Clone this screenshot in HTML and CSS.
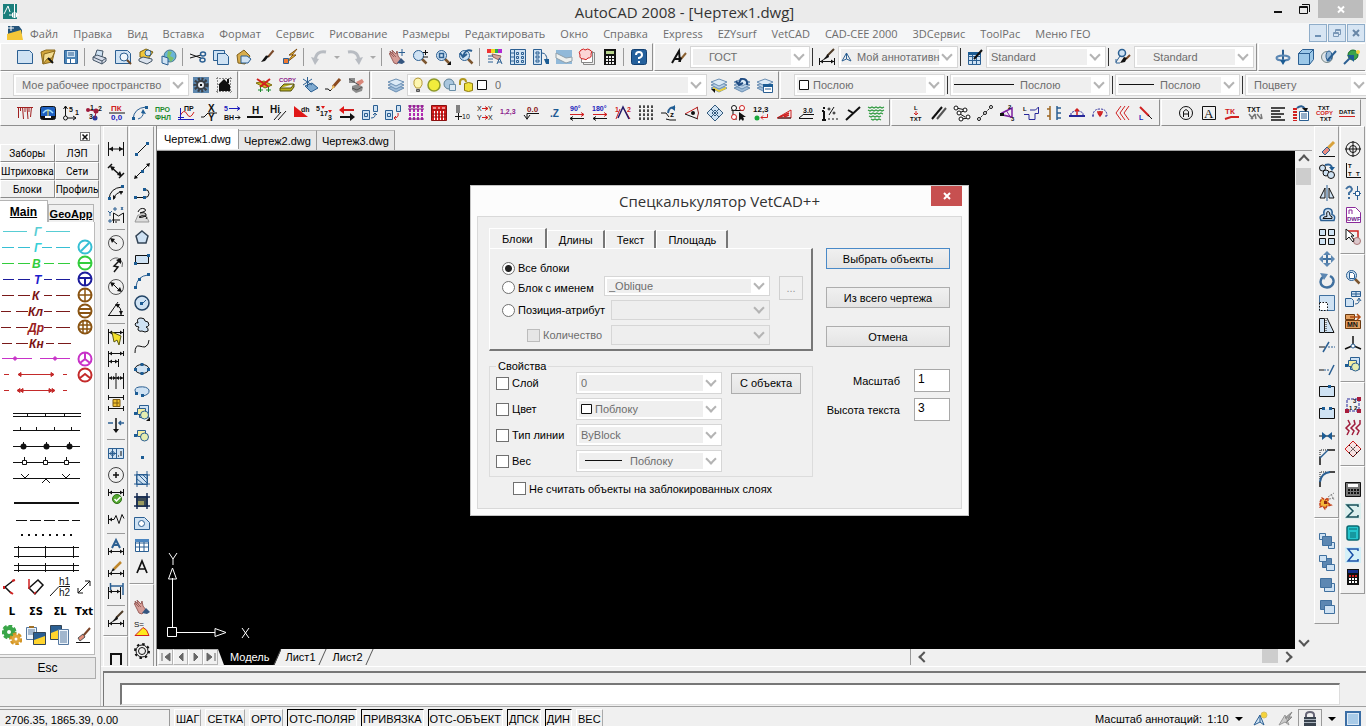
FILE: index.html
```html
<!DOCTYPE html>
<html lang="ru">
<head>
<meta charset="utf-8">
<title>AutoCAD 2008 - [Чертеж1.dwg]</title>
<link rel="stylesheet" href="styles.css">
</head>
<body>
<svg class="defs" aria-hidden="true">
  <symbol id="dim" viewBox="0 0 16 16"><path class="k" d="M.5 1v14M15.500 1v14M1 8h14"/><path class="fk n" d="M1 8l4-2.500v5zM15 8l-4-2.500v5z"/></symbol>
  <symbol id="dimlow" viewBox="0 0 16 16"><path class="k" d="M.5 9v7M15.500 9v7M1 12.500h14"/><path class="fk n" d="M1 12.500l3-2v4zM15 12.500l-3-2v4z"/></symbol>
  <symbol id="dimtop" viewBox="0 0 16 16"><path class="k" d="M.5 0v7M15.500 0v7M1 3.500h14"/><path class="fk n" d="M1 3.500l3-2v4zM15 3.500l-3-2v4z"/></symbol>
  <symbol id="brush" viewBox="0 0 16 16"><path class="w2" stroke="#7a4a2a" d="M14.500 1.500L9 8"/><path class="fk n" d="M10 7L7 6.500 2 13l4-1z"/></symbol>
  <symbol id="lens" viewBox="0 0 16 16"><path stroke="#7c5630" stroke-width="2.500" d="M10 10l4.500 4.500"/><circle class="fl b" cx="6.500" cy="6.500" r="5"/></symbol>
  <symbol id="layers" viewBox="0 0 16 16"><path fill="#9dbbd8" stroke="#6b8fb3" d="M0 11l8-3 8 3-8 4z"/><path fill="#b9d0e6" stroke="#6b8fb3" d="M0 8l8-3 8 3-8 4z"/><path fill="#dceaf6" stroke="#6b8fb3" d="M0 5l8-3 8 3-8 4z"/></symbol>
  <symbol id="page" viewBox="0 0 16 16"><path class="fl b" d="M.5 1.500h12l3 3v10H.5z"/></symbol>
  <symbol id="shapes" viewBox="0 0 16 16"><path fill="#f4eda0" class="b" d="M3.500 3.500h8v6h-8z"/><circle fill="#e5edb0" class="b" cx="10.500" cy="10" r="4"/><path class="fb n" d="M0 7h3v3H0z"/></symbol>
  <symbol id="hand" viewBox="0 0 16 16"><path fill="#d69c96" stroke="#9a625e" d="M0 4l2 1-1-3 3 3-1-4 4 4 1-3 1 5 3 4-4 4-3-1z"/><path stroke="#9a625e" d="M2 5l3 3M4 5l3 3"/><path fill="#34557f" class="n" d="M8 14l4-5 4 4-3 2z"/></symbol>
</svg>

<header class="titlebar">
  <svg class="i" viewBox="0 0 16 16"><path fill="#1b7f7c" class="n" d="M0 0h14v15H0z"/><path class="w" d="M1 10l4-8 2 6M11.500 0v14M6 11h10M9.500 9h4v4h-4z"/></svg>
  <h1>AutoCAD 2008 - [Чертеж1.dwg]</h1>
  <div class="wbtns">
    <button aria-label="Свернуть"><svg class="i" viewBox="0 0 16 16"><path class="k w2" d="M4 11h8"/></svg></button>
    <button aria-label="Развернуть"><svg class="i" viewBox="0 0 16 16"><path class="k" d="M3.500 5.500h8v7h-8zM3 6.500h9M6 3.500h7.500V11"/></svg></button>
    <button class="wclose" aria-label="Закрыть"><svg class="i" viewBox="0 0 16 16"><path class="w w2" d="M5 5.500l6 6M11 5.500l-6 6"/></svg></button>
  </div>
</header>

<nav class="menubar">
  <svg class="i" viewBox="0 0 16 16"><path fill="#24547a" class="n" d="M1 1h11l3 4v4L1 14z"/><path fill="#f5c738" class="n" d="M0 9l14-4 2 10H0z"/><path class="w" d="M1 3h6M4 0v6"/></svg>
  <a href="#">Файл</a><a href="#">Правка</a><a href="#">Вид</a><a href="#">Вставка</a><a href="#">Формат</a><a href="#">Сервис</a><a href="#">Рисование</a><a href="#">Размеры</a><a href="#">Редактировать</a><a href="#">Окно</a><a href="#">Справка</a><a href="#">Express</a><a href="#">EZYsurf</a><a href="#">VetCAD</a><a href="#">CAD-CEE 2000</a><a href="#">3DСервис</a><a href="#">ToolPac</a><a href="#">Меню ГЕО</a>
  <div class="mdi">
    <button aria-label="Свернуть документ"><svg class="i" viewBox="0 0 16 16"><path class="w2" stroke="#6e90b4" d="M5 11h6"/></svg></button>
    <button aria-label="Восстановить документ"><svg class="i" viewBox="0 0 16 16"><path stroke="#7a98b8" d="M4.500 7.500h5v4h-5zM6.500 7V4.500h5v5H10M4 8.500h6M6 5.500h6"/></svg></button>
    <button aria-label="Закрыть документ"><svg class="i" viewBox="0 0 16 16"><path class="w2" stroke="#6886a6" d="M5 5l6 6M11 5l-6 6"/></svg></button>
  </div>
</nav>

<div class="bar">
  <div class="grp lead">
    <button aria-label="Создать"><svg class="i" viewBox="0 0 16 16"><use href="#page"/></svg></button>
    <button aria-label="Открыть"><svg class="i" viewBox="0 0 16 16"><path fill="#d2a63c" stroke="#8b6a1c" d="M1 3l5-2h9l-3 12-9 2z"/><path fill="#f3dc90" stroke="#8b6a1c" d="M4 5l11-3-3 7-5 1-4 5z"/><path class="k w2" d="M8 9l5 5"/></svg></button>
    <button aria-label="Сохранить"><svg class="i" viewBox="0 0 16 16"><path fill="#4d86b8" class="b" d="M1.500 1.500h13v13h-13z"/><path class="fl n" d="M4 2h8v6H4z"/><path class="fw n" d="M4 10h8v4H4z"/><path class="b" d="M5 4h6M5 6h6M7.500 10v4"/></svg></button>
    <span class="sep"></span>
    <button aria-label="Печать"><svg class="i" viewBox="0 0 16 16"><path class="fl" stroke="#456" d="M3 7l2-6 6 1-1 6z"/><path fill="#d6dce8" stroke="#456" d="M1 8l4-2 9 3v3l-4 3-9-4z"/><path stroke="#456" d="M1 8l9 4 4-3M10 12v3"/></svg></button>
    <button aria-label="Просмотр печати"><svg class="i" viewBox="0 0 16 16"><use href="#page"/><circle fill="#eef6fc" class="b" cx="9" cy="8" r="4"/><path stroke="#6b4423" class="w2" d="M12 11l4 4"/></svg></button>
    <button aria-label="Публикация"><svg class="i" viewBox="0 0 16 16"><path fill="#f0c63a" stroke="#7d6210" d="M2 3l6-3 7 3-5 7-8-2z"/><circle class="fl b" cx="10" cy="4" r="3"/><path fill="#dbe3ee" stroke="#456" d="M1 10l4-2 9 2v2l-5 3-8-3z"/></svg></button>
    <button aria-label="Публикация в Интернете"><svg class="i" viewBox="0 0 16 16"><circle fill="#69b4d8" stroke="#47788f" cx="9" cy="7" r="6"/><path fill="#7cc06b" class="n" d="M7 2l4 1-2 4 4 2-3 4-4-5z"/><path class="fl b" d="M1 7l6 2v7l-6-2z"/></svg></button>
    <span class="sep"></span>
    <button aria-label="Вырезать"><svg class="i" viewBox="0 0 16 16"><path class="k" d="M0 5l11 4M0 9l11-3"/><ellipse class="b" stroke-width="1.500" cx="13" cy="5" rx="2.500" ry="2"/><ellipse class="b" stroke-width="1.500" cx="12.500" cy="11" rx="2.500" ry="2"/></svg></button>
    <button aria-label="Копировать"><svg class="i" viewBox="0 0 16 16"><path class="fl b" d="M.5 1.500h11v10H.5z"/><path class="fl b" d="M4.500 4.500h8l3 3v8h-11z"/></svg></button>
    <button aria-label="Вставить"><svg class="i" viewBox="0 0 16 16"><path fill="#d8ad4c" stroke="#81611c" d="M1 6l7-5 6 6-5 8-7-1z"/><path class="fl b" d="M5 7h6l4 3-3 4H5z"/></svg></button>
    <button aria-label="Копирование свойств"><svg class="i" viewBox="0 0 16 16"><use href="#brush"/></svg></button>
    <button aria-label="Редактор блоков"><svg class="i" viewBox="0 0 16 16"><path fill="#ffd632" stroke="#7d4b13" d="M15 0L7 6h4L4 14l10-8h-4z"/><path fill="#f07830" class="b" d="M1.500 9.500h5v5h-5z"/></svg></button>
    <span class="sep"></span>
    <button aria-label="Отменить"><svg class="i" viewBox="0 0 16 16"><path stroke="#b8bcc2" stroke-width="3" d="M15 3Q5 1 4 12"/><path fill="#b8bcc2" class="n" d="M0 8l8 2-4 6z"/></svg></button>
    <button class="dd" aria-label="Список отмен"></button>
    <button aria-label="Повторить"><svg class="i" viewBox="0 0 16 16"><path stroke="#b8bcc2" stroke-width="3" d="M1 3Q11 1 12 12"/><path fill="#b8bcc2" class="n" d="M16 8l-8 2 4 6z"/></svg></button>
    <button class="dd" aria-label="Список повторов"></button>
    <span class="sep"></span>
    <button aria-label="Панорамирование"><svg class="i" viewBox="0 0 16 16"><use href="#hand"/><path class="b" d="M13 0v7M9.500 3.500H16"/></svg></button>
    <button aria-label="Зумирование"><svg class="i" viewBox="0 0 16 16"><use href="#lens"/><path class="k" d="M13.500 1v5M11 3.500h5M11 8h5"/></svg></button>
    <button aria-label="Показать рамкой"><svg class="i" viewBox="0 0 16 16"><use href="#lens"/><path class="b" stroke-width="1.500" d="M4.500 4.500h4v4h-4z"/><path class="fk n" d="M16 12v4h-4z"/></svg></button>
    <button aria-label="Показать предыдущий"><svg class="i" viewBox="0 0 16 16"><use href="#lens"/><path class="b w2" d="M14 2Q8-1 5 7M2 4l3 4 4-3"/></svg></button>
    <span class="sep"></span>
    <button aria-label="Свойства"><svg class="i" viewBox="0 0 16 16"><path fill="#e33" class="n" d="M0 0h4v4H0z"/><path fill="#f4d820" class="n" d="M4 0h4v4H4z"/><path fill="#28b14c" class="n" d="M8 0h3v4H8z"/><path fill="#b32ad6" class="n" d="M11 0h4v4h-4z"/><path fill="#d8a49c" stroke="#94645c" d="M5 5l9 2-2 4-6-3z"/><path class="b" d="M1 7h5M1 10h5M1 13h5M10 15l2.500-6 2.500 6M11 13h3"/></svg></button>
    <button aria-label="Центр управления"><svg class="i" viewBox="0 0 16 16"><path class="fl b" d="M.5.5h15v15H.5z"/><path class="b" d="M4.500 1v15M6.500 3.500h2v2h-2zM11.500 3.500h2v2h-2zM6.500 7.500h2v2h-2zM11.500 7.500h2v2h-2zM6.500 11.500h2v2h-2zM11.500 11.500h2v2h-2zM1 4h3M1 8h3M1 12h3"/></svg></button>
    <button aria-label="Палитры"><svg class="i" viewBox="0 0 16 16"><path class="fl b" d="M.5.500h8v15h-8z"/><path class="b" d="M3 3h3v2H3zM3 7h3v2H3zM3 11h3v2H3zM9 4q5 0 5 8"/><path class="fb n" d="M11 10h5v5h-3z"/></svg></button>
    <button aria-label="Подшивки"><svg class="i" viewBox="0 0 16 16"><path fill="#91b9d9" class="n" d="M0 1h16v14H0z"/><path fill="#eef0ee" stroke="#8f9faa" d="M0 4l10 5 6-1v4l-6 2L0 9z"/></svg></button>
    <button aria-label="Пометки"><svg class="i" viewBox="0 0 16 16"><path fill="#ededed" stroke="#888" d="M4.500 3.500h11v12h-11z"/><path class="fw" stroke="#888" d="M2.500 2.500h11v11h-11z"/><path class="r" fill="#fbd5d5" d="M2 1q3-2 4 0 3-2 5 0 3 1 1 4 1 4-3 4-2 3-4 1-5 0-4-4-2-3 1-5z"/></svg></button>
    <button aria-label="Калькулятор"><svg class="i" viewBox="0 0 16 16"><path class="fk n" d="M2 0h12v16H2z"/><path fill="#b6d28c" class="n" d="M4 2h8v3H4z"/><path stroke="#eee" stroke-width="2" stroke-dasharray="2 1" d="M4 8h8M4 11h8M4 14h8"/></svg></button>
    <span class="sep"></span>
    <button aria-label="Справка"><svg class="i" viewBox="0 0 16 16"><rect fill="#24609c" stroke="#123f70" x=".5" y=".5" width="15" height="15" rx="2"/><path class="w w2" d="M5 6q0-3 3-3t3 3q0 2-3 3v1M8 12v2"/></svg></button>
  </div>
  <div class="grp styles">
    <button aria-label="Стиль текста"><svg class="i" viewBox="0 0 16 16"><path class="k w2" d="M1 14L8 2l1 11M4 10h5"/><path class="w2" stroke="#8a6030" d="M15 4l-5 6"/><path class="fk n" d="M11 9l-2-1-2 5 3-1z"/></svg></button>
    <span class="combo c120"><select aria-label="Текстовый стиль" class="in16"><option>ГОСТ</option></select></span>
    <span class="vsep"></span>
    <button aria-label="Размерный стиль"><svg class="i" viewBox="0 0 16 16"><use href="#dimlow"/><path class="w2" stroke="#4f3c28" d="M15 0L8 7"/><path class="fk n" d="M9 5L3 12l7-4z"/></svg></button>
    <span class="combo c120"><svg class="i pre" viewBox="0 0 16 16"><path class="b" d="M4 12L8.500 4l4.500 8-4.500-2zM8.500 4v6"/></svg><select aria-label="Размеры" class="in16"><option>Мой аннотативн</option></select></span>
    <span class="vsep"></span>
    <button aria-label="Стиль таблиц"><svg class="i" viewBox="0 0 16 16"><path class="fl b" d="M1.500 3.500h12v12h-12zM1 7.500h13M1 11.500h13M5.500 4v12M9.500 4v12"/><path class="fb n" d="M1 3h13v3H1z"/><path class="k w2" d="M15 1L7 10"/></svg></button>
    <span class="combo c120"><select aria-label="Стиль таблицы"><option>Standard</option></select></span>
    <span class="vsep"></span>
    <button aria-label="Стиль мультивыносок"><svg class="i" viewBox="0 0 16 16"><circle class="fl b" stroke-width="1.500" cx="7" cy="4" r="3.500"/><path class="b" d="M5 7l-4 6M1 10v4h4"/><path class="w2" stroke="#7a4a2a" d="M15 6l-4 4"/><path class="fk n" d="M12 9l-3-1-4 6 5-1z"/></svg></button>
    <span class="combo c120"><select aria-label="Стиль выноски" class="in16"><option>Standard</option></select></span>
  </div>
  <div class="grp lead open">
    <button aria-label="Орбита"><svg class="i" viewBox="0 0 16 16"><path class="fb b" d="M7.500 1h1v13h-1z"/><ellipse stroke="#5b87b3" stroke-width="2" cx="8" cy="9" rx="6.500" ry="2.500"/><path class="fb n" d="M5 11h6l-3 5z"/></svg></button>
    <button aria-label="Куб"><svg class="i" viewBox="0 0 16 16"><path fill="#9cc8e8" class="b" d="M.5 4.500h11v11H.5zM.5 4.500l4-4h11l-4 4zM11.500 4.500l4-4v10l-4 5z"/></svg></button>
    <button aria-label="Сфера"><svg class="i" viewBox="0 0 16 16"><circle fill="#dce3e8" stroke="#788" cx="6" cy="8" r="5.500"/><ellipse fill="#9cbcd8" class="b" cx="8" cy="7" rx="3" ry="5"/><path class="b w2" d="M6 12l9-10"/></svg></button>
    <button aria-label="Визуализация"><svg class="i" viewBox="0 0 16 16"><circle fill="#3aa34a" stroke="#1a6a2a" cx="9" cy="6" r="5"/><circle fill="#f4d43a" class="n" cx="14" cy="3" r="2"/><path class="b w2" d="M0 15l8-8"/><path class="fb n" d="M10 6H3l7 7z"/></svg></button>
  </div>
</div>

<div class="bar">
  <div class="grp lead">
    <span class="combo c176"><select aria-label="Рабочее пространство" class="in6"><option>Мое рабочее пространство</option></select></span>
    <button aria-label="Параметры пространства"><svg class="i" viewBox="0 0 16 16"><path fill="#5d87ae" class="n" d="M0 0h16v16H0z"/><circle fill="none" stroke="#3a3f46" stroke-width="3" stroke-dasharray="2 1.500" cx="8" cy="8" r="6"/><circle fill="#e5e9ee" stroke="#3a3f46" stroke-width="2" cx="8" cy="8" r="4"/><path class="fk n" d="M7 7h2v2H7z"/></svg></button>
    <button aria-label="Мое пространство"><svg class="i" viewBox="0 0 16 16"><path class="g" stroke-dasharray="2 1" d="M1.500 0v16M14.500 0v16M0 1.500h16M0 14.500h16"/><path class="fk n" d="M2 8l6-6 6 6v6H3V8zM11 2h2v4h-2z"/></svg></button>
  </div>
  <div class="grp lead">
    <button aria-label="Слой объекта"><svg class="i" viewBox="0 0 16 16"><path fill="#c8b820" stroke="#7d6c10" d="M0 6l8-2 8 4-7 3z"/><path class="r w2" d="M1 2l12 8M14 2L4 10"/><path stroke="#1c8a2c" d="M4.500 10v5M2 13h5M12.500 10v5M10 13h5"/></svg></button>
    <button aria-label="Копия слоя"><svg class="i" viewBox="0 0 16 16"><path fill="#b8b020" stroke="#555010" d="M1 11l4-4h10l-3 4zM1 11v3h11l3-4V7"/><text class="t6" fill="#8a1a8a" x="0" y="5">COPY</text></svg></button>
    <button aria-label="Заморозить слой"><svg class="i" viewBox="0 0 16 16"><path fill="#7faad0" class="b" d="M3 9l7-3 6 5-7 4z"/><path class="b" d="M5.500 0v10M1 2l9 6M10 2L1 8"/></svg></button>
    <button aria-label="Карандаш"><svg class="i" viewBox="0 0 16 16"><path stroke="#8a4a20" stroke-width="3" d="M15 2L8 10"/><path class="k" d="M0 12q4-1 5 2l4-4"/><path fill="#f0c060" class="n" d="M8 8l2 2-4 3z"/></svg></button>
    <button aria-label="Очистить слой"><svg class="i" viewBox="0 0 16 16"><path fill="#8c8c8c" class="n" d="M1 1h6v5H1zM4 9l6-2 5 3-1 4-6 2-4-3z"/><path fill="#d8877a" class="n" d="M8 5l6-3 2 3-5 4z"/><path stroke="#555" d="M1 2l10 6M4 11l5 2 5-3"/></svg></button>
  </div>
  <div class="grp lead">
    <button aria-label="Диспетчер слоев"><svg class="i" viewBox="0 0 16 16"><use href="#layers"/></svg></button>
    <span class="combo c300"><span class="pre layer">
      <svg class="i" viewBox="0 0 16 16"><path fill="#fdf6b0" stroke="#b59a3a" d="M6 11Q3 8 4 4q1-3 4-3t4 3q1 4-2 7z"/><path fill="#999" stroke="#555" d="M6.500 12.500h3v2h-3z"/></svg>
      <svg class="i" viewBox="0 0 16 16"><circle fill="#f2ec3c" stroke="#8e9a2a" stroke-width="1.500" cx="8" cy="8" r="6"/></svg>
      <svg class="i" viewBox="0 0 16 16"><circle fill="#a9c6dd" stroke="#5d8097" cx="7" cy="7" r="5"/><path fill="#dce9f2" stroke="#6b8fa8" d="M7.500 7.500h6v6h-6z"/></svg>
      <svg class="i" viewBox="0 0 16 16"><path stroke="#b09820" stroke-width="2" d="M2 8V5q0-3 3-3t3 3"/><path fill="#f0e03a" stroke="#8e7a10" d="M6.500 6.500q4-2 8 0v7q-4 2-8 0z"/></svg>
      <svg class="i" viewBox="0 0 16 16"><path class="fw k" d="M3.500 3.500h9v9h-9z"/></svg></span><select aria-label="Слой" class="in80"><option>0</option></select></span>
    <button aria-label="Сделать слой текущим"><svg class="i" viewBox="0 0 16 16"><use href="#layers"/><path fill="#e8cc3a" class="n" d="M2 10l6 3 7-3v2l-7 3-6-3z"/><path class="fk n" d="M0 12h4v4z"/></svg></button>
    <button aria-label="Предыдущее состояние"><svg class="i" viewBox="0 0 16 16"><use href="#layers"/><path class="w2" stroke="#1f4b82" d="M13 8q1-7-6-6L5 6M2 4l3 4 4-2"/></svg></button>
    <button aria-label="Состояния слоев"><svg class="i" viewBox="0 0 16 16"><use href="#layers"/><path class="fw b" d="M6.500 7.500h9v8h-9z"/><path class="fb n" d="M6 7h10v3H6z"/><path class="b" d="M8 12h6"/></svg></button>
  </div>
  <div class="grp props open">
    <span class="combo c151"><svg class="i pre" viewBox="0 0 16 16"><path class="fw k" d="M5.500 3.500h9v9h-9z"/></svg><select aria-label="Цвет слоя" class="in16"><option>Послою</option></select></span>
    <span class="vsep"></span>
    <span class="combo c160"><svg class="ln pre" viewBox="0 0 66 4"><path class="k" d="M4 1.500h60"/></svg><select aria-label="Тип линии слоя" class="in66"><option>Послою</option></select></span>
    <span class="vsep"></span>
    <span class="combo c125"><svg class="ln pre" viewBox="0 0 66 4"><path class="k" d="M4 1.500h35"/></svg><select aria-label="Вес линии слоя" class="in40"><option>Послою</option></select></span>
    <span class="vsep"></span>
    <span class="combo c125"><select aria-label="Стиль печати" class="in6"><option>Поцвету</option></select></span>
  </div>
</div>

<div class="bar short">
  <div class="grp lead">
    <button aria-label="Откос"><svg class="i" viewBox="0 0 16 16"><path stroke="#a02020" d="M0 2.500h16M1.500 2v11M3.500 2v4M5.500 2l1 12M8 2v5M10 2l1 12M12 2v5M14.500 2l-1 10"/></svg></button>
    <button aria-label="Координаты"><svg class="i" viewBox="0 0 16 16"><rect fill="#1d5fc0" stroke="#111" x=".5" y="1.500" width="15" height="13" rx="2"/><path class="fk n" d="M1 11h14v3H1z"/><path stroke="#9fe0ff" stroke-width="1.500" d="M3 8q5-6 10 0"/><path stroke="#ffe040" d="M8 5v6"/><path class="fw n" d="M5 11h6v2H5z"/></svg></button>
    <button aria-label="Сетка осей"><svg class="i" viewBox="0 0 16 16"><text class="t7" x="6" y="7">5</text><text class="t7" x="12" y="10">1</text><circle class="k" cx="2.500" cy="13" r="2"/><path class="k" d="M2.500 11V1M.5 4l2-3 2 3M5 13h8M10 11l3 2-3 2"/></svg></button>
    <button aria-label="Нумерация"><svg class="i" viewBox="0 0 16 16"><circle fill="#a01c3c" class="n" cx="2" cy="5" r="2"/><circle fill="#a01c3c" class="n" cx="10" cy="6" r="2.500"/><circle fill="#283a9c" class="n" cx="9" cy="13" r="2.500"/><path stroke="#a01c3c" d="M2 5l8 1-1 7"/><text class="t7" x="4" y="5">1</text><text class="t7" x="12" y="6">2</text><text class="t7" x="3" y="14">3</text></svg></button>
    <button aria-label="Пикет"><svg class="i" viewBox="0 0 16 16"><text class="t8 cr" x="2" y="6">ПК</text><path class="k" d="M0 8h16"/><text class="t8 cb" x="2" y="15">0,0</text></svg></button>
    <button aria-label="Дуга"><svg class="i" viewBox="0 0 16 16"><path class="b" d="M1 14Q2 3 14 2M6 14q6-2 5-7"/><path class="fb n" d="M0 12h3v3H0zM13 1h3v3h-3zM11 4l3 5-5-1z"/></svg></button>
    <button aria-label="Профиль линии"><svg class="i" viewBox="0 0 16 16"><text class="t7 cg" x="0" y="7">ПРО</text><text class="t7 cg" x="0" y="15">ФНЛ</text></svg></button>
    <button aria-label="График профиля"><svg class="i" viewBox="0 0 16 16"><text class="t7" x="6" y="6">ПР</text><path class="r" d="M2 11q4-8 7-2t7-2"/><path stroke="#1b1bbb" d="M2.500 3v11M0 14.500h16M0 12.500h6"/></svg></button>
    <button aria-label="XY"><svg class="i" viewBox="0 0 16 16"><text class="t9" x="7" y="7">X</text><text class="t9" x="7" y="16">Y</text><path class="k" d="M0 12h3l4-4h9"/></svg></button>
    <button aria-label="ВН"><svg class="i" viewBox="0 0 16 16"><text class="t7 cb" x="0" y="6">5</text><path stroke="#1b1bbb" d="M5 3.500h11M13 1.500l3 2-3 2"/><text class="t7" x="0" y="15">BH</text><path class="k" d="M11 12.500h5M14 10.500l2 2-2 2"/></svg></button>
    <button aria-label="Отметка H"><svg class="i" viewBox="0 0 16 16"><text class="t9" x="5" y="9">H</text><path class="k w2" d="M0 12h16"/></svg></button>
    <button aria-label="Отметка Hi"><svg class="i" viewBox="0 0 16 16"><text class="t9" x="0" y="8">Hi</text><path class="k" d="M4 15l7-8M8 15l8-9"/></svg></button>
    <button aria-label="Уклон dh"><svg class="i" viewBox="0 0 16 16"><path class="fr n" d="M1 1v11h14z"/><text class="t7" x="8" y="7">dh</text></svg></button>
    <button aria-label="Перенумеровать"><svg class="i" viewBox="0 0 16 16"><text class="t7" x="0" y="6">5</text><text class="t7" x="4" y="11">17</text><text class="t7" x="12" y="15">3</text><path class="fr n" d="M5 1h4l-2 3zM12 5h4l-2 3z"/></svg></button>
    <button aria-label="Поменять местами"><svg class="i" viewBox="0 0 16 16"><path class="r w2" d="M4 5h11"/><path class="fr n" d="M0 5l5-4v8z"/><path class="k w2" d="M1 12h11"/><path class="fk n" d="M16 12l-5-4v8z"/></svg></button>
    <button aria-label="Копия блока"><svg class="i" viewBox="0 0 16 16"><path class="fl b" d="M.5 5.500h7v9h-7zM2.500 8.500h3v3h-3zM11.500.500h4v6h-4z"/><path class="b" d="M9 13q5 0 4-5M11 10l2-2 2 2"/></svg></button>
    <button aria-label="Замена блока"><svg class="i" viewBox="0 0 16 16"><path class="fl b" d="M.5 5.500h7v9h-7zM2.500 8.500h3v3h-3zM11.500.500h4v6h-4z"/><path class="r" d="M9 13q5 0 4-5M11 11l-2 2 2 2"/></svg></button>
    <button aria-label="Ведомость"><svg class="i" viewBox="0 0 16 16"><path class="w2" stroke="#b22bb2" stroke-dasharray="3 1" d="M2 0v16M6 0v16M10 0v16M14 0v16"/><path stroke="#7c1b7c" d="M0 1h16M0 4h16M0 14h16"/></svg></button>
    <button aria-label="Таблица"><svg class="i" viewBox="0 0 16 16"><path fill="#d81c1c" stroke="#8a1010" d="M.5.500h15v15H.5z"/><path stroke="#fff" d="M3.500 6v9M6.500 6v9M9.500 6v9M12.500 6v9M2 3h3M7 3h2M11 3h3"/><path stroke="#8a1010" d="M1 5h15M1 9h15M1 12h15"/></svg></button>
    <button aria-label="Плюс 10"><svg class="i" viewBox="0 0 16 16"><path class="k" d="M2 1h4M2 3h4M2 5h4M2 7h4M4.500 8v7M1 11.500h7"/><text class="t7 thin" x="8" y="14">10</text></svg></button>
    <button aria-label="Смена осей"><svg class="i" viewBox="0 0 16 16"><text class="t7 thin" x="0" y="6">X</text><text class="t7 thin" x="11" y="6">Y</text><text class="t7 thin" x="0" y="15">Y</text><text class="t7 thin" x="11" y="15">X</text><path class="r" d="M5 3.500h6M8 1.500l3 2-3 2M5 12.500h6M8 10.500l3 2-3 2"/></svg></button>
    <button aria-label="Номера"><svg class="i" viewBox="0 0 16 16"><text class="t7" fill="#8a1a8a" x="0" y="9">1,2,3</text></svg></button>
    <button aria-label="Отметка ноль"><svg class="i" viewBox="0 0 16 16"><text class="t8" fill="#8b1a1a" x="4" y="7">0.0</text><path class="k" d="M16 8.500H4v6M1 10l3 4 3-4"/></svg></button>
    <button aria-label="Координата Z"><svg class="i" viewBox="0 0 16 16"><text class="t9" fill="#1d5a94" x="4" y="12">.Z</text></svg></button>
    <button aria-label="Поворот 90"><svg class="i" viewBox="0 0 16 16"><text class="t7 cb" x="1" y="6">90°</text><path class="r" d="M1 9.500h14M12 7.500l3 2-3 2"/><path class="k" d="M1 13.500h14M4 11.500l-3 2 3 2"/></svg></button>
    <button aria-label="Поворот 180"><svg class="i" viewBox="0 0 16 16"><text class="t7 cb" x="0" y="6">180°</text><path class="r" d="M1 9.500h14M12 7.500l3 2-3 2"/><path class="k" d="M1 13.500h14M4 11.500l-3 2 3 2"/></svg></button>
    <button aria-label="Засечка"><svg class="i" viewBox="0 0 16 16"><path class="r" d="M1 14L5 4M15 14L9 4"/><path stroke="#241b6a" stroke-width="1.500" d="M3 13L8 2l6 12"/><text class="t7 cr" x="0" y="7">1</text><text class="t7 cr" x="12" y="7">2</text></svg></button>
    <button aria-label="Сетка"><svg class="i" viewBox="0 0 16 16"><path class="k" stroke-dasharray="2 2" d="M1 2h15M1 6h15M1 10h15M1 14h15"/><path class="k" stroke-dasharray="3 1" d="M2 0v16M6 0v16M10 0v16M14 0v16"/></svg></button>
    <button aria-label="Поворот Z"><svg class="i" viewBox="0 0 16 16"><path class="k" d="M0 8h5l3 4M5 14l4 1h6"/><path class="b w2" d="M14 3q-6-2-7 5"/><path class="fb n" d="M14 0v6l-4-3z"/><text class="t8" x="9" y="12">z</text></svg></button>
    <button aria-label="Конус"><svg class="i" viewBox="0 0 16 16"><path class="r" d="M1 9L14 2"/><path class="k" d="M1 9l13 5"/><path stroke="#8a2020" d="M13 2q3 6 0 12"/><circle class="fk n" cx="9" cy="8" r="2"/></svg></button>
    <button aria-label="Ромб"><svg class="i" viewBox="0 0 16 16"><path class="fl" stroke="#345a7c" d="M8 0l8 8-8 8-8-8z"/><path stroke="#345a7c" d="M4 4l8 8M12 4l-8 8M8 5l3 3-3 3-3-3z"/></svg></button>
    <button aria-label="Узлы"><svg class="i" viewBox="0 0 16 16"><path class="k" d="M1.500 5.500h12M3 2v12h4"/><circle class="fw k" cx="4" cy="3" r="2.500"/><circle class="fw r" cx="12" cy="3" r="2.500"/><circle class="fw r" cx="4" cy="12" r="2.500"/><path class="fk n" d="M9 7v9l2-2 2 2 1-2-1-2h3z"/></svg></button>
    <button aria-label="Точка 12,3"><svg class="i" viewBox="0 0 16 16"><text class="t8" x="0" y="7">12,3</text><circle fill="#19a83a" class="n" cx="4" cy="13" r="2.500"/><path class="r" d="M14.500 9v3.500H8M10 10.500l-2 2 2 2"/></svg></button>
    <button aria-label="Уклон"><svg class="i" viewBox="0 0 16 16"><path class="r" d="M1 13L15 5v8z"/><path class="k" d="M2 13h13"/><path class="r" stroke-width="1.500" d="M4 12l9-4M8 12l5-2"/></svg></button>
    <button aria-label="Отметка 3.0"><svg class="i" viewBox="0 0 16 16"><text class="t7" x="4" y="8">3.0</text><path class="k" d="M5 9.500h10M0 13.500h14M0 13l5-4"/></svg></button>
    <button aria-label="Промилле"><svg class="i" viewBox="0 0 16 16"><path class="k w2" d="M2 2v2M2 6v9M0 15h4M0 6h2"/><circle class="k" cx="7" cy="4" r="1"/><circle class="k" cx="12" cy="8" r="1"/><path class="k" d="M7 10l5-8M6 14h2M10 14h2M14 14h2"/></svg></button>
    <button aria-label="Примыкание"><svg class="i" viewBox="0 0 16 16"><path class="k w2" d="M1 15L15 2M3 5l5 3"/></svg></button>
    <button aria-label="Водная поверхность"><svg class="i" viewBox="0 0 16 16"><path stroke="#2f9a3f" stroke-width="1.200" d="M0 2l2 1 2-1 2 1 2-1 2 1 2-1 2 1 2-1M0 5l2 1 2-1 2 1 2-1 2 1 2-1 2 1 2-1M1 8l2 1 2-1 2 1 2-1 2 1 2-1 2 1M1 11l2 1 2-1 2 1 2-1 2 1 2-1M3 14l2 1 2-1 2 1 2-1 2 1"/></svg></button>
  </div>
  <div class="grp lead">
    <button aria-label="Длина в текст"><svg class="i" viewBox="0 0 16 16"><text class="t6" x="6" y="5">L</text><path class="r" d="M8 6v4M6 8l2 2 2-2"/><text class="t6" x="2" y="16">TXT</text></svg></button>
    <button aria-label="Параллельные"><svg class="i" viewBox="0 0 16 16"><path class="k w2" d="M1 14L11 2"/><path class="w2" stroke="#555" d="M6 14L15 3"/></svg></button>
    <button aria-label="Цепочка"><svg class="i" viewBox="0 0 16 16"><path class="k" d="M2 3l10 2M3 7l8 5M4 8l9-3M7 14l8-1"/><circle class="fw k" cx="2" cy="3" r="2"/><circle class="fw k" cx="11" cy="5" r="2"/><circle class="fw k" cx="5" cy="8" r="2"/><circle class="fw k" cx="7" cy="14" r="2"/><circle class="fw k" cx="14" cy="12" r="2"/></svg></button>
    <button aria-label="Отрезок узлов"><svg class="i" viewBox="0 0 16 16"><path class="k" stroke-dasharray="2 1" d="M2 14L14 2"/><circle class="fw k" cx="2" cy="14" r="1.500"/><circle class="fw k" cx="8" cy="8" r="1.500"/><circle class="fw k" cx="14" cy="2" r="1.500"/></svg></button>
    <button aria-label="Вершины"><svg class="i" viewBox="0 0 16 16"><path stroke="#7b1fa0" stroke-width="1.500" d="M2 8l10-5v9L3 10z"/><path stroke="#7b1fa0" d="M6 5l5 8"/><text class="t6" x="8" y="4">2</text><text class="t6" x="11" y="16">3</text><path class="fk n" d="M0 8h4v3H0z"/></svg></button>
    <button aria-label="Контур L"><svg class="i" viewBox="0 0 16 16"><text class="t6" x="0" y="6">L</text><path stroke="#28289a" d="M1 9.500h5v5h6v-6h3.500V2l-3 3H7"/></svg></button>
    <button aria-label="Опоры"><svg class="i" viewBox="0 0 16 16"><path stroke="#9c6520" stroke-width="1.500" d="M4 1v14M1 4h3M1 11h3"/><path class="b" stroke-width="1.500" d="M11 1v14M11 3h4M11 8h4M11 13h4"/></svg></button>
    <button aria-label="Бровка"><svg class="i" viewBox="0 0 16 16"><path stroke="#28289a" stroke-width="2" d="M0 11h16"/><path stroke="#28289a" stroke-dasharray="2 1" d="M2 10V8q6-4 12 0v2"/><path class="r" stroke-width="1.500" d="M8 10V4M6 6l2-2 2 2"/></svg></button>
    <button aria-label="Купол"><svg class="i" viewBox="0 0 16 16"><path stroke="#28289a" stroke-dasharray="2 1" d="M1 11q0-7 7-7t7 7M0 11h3M13 11h3"/><path class="r" stroke-width="1.500" d="M5 7h6M8 6v5M6 8l2 3 2-3"/></svg></button>
    <button aria-label="Зигзаги"><svg class="i" viewBox="0 0 16 16"><path class="r" d="M6 1L1 8l5 7M10 1L5 8l5 7M14 1L9 8l5 7"/></svg></button>
    <button aria-label="Наклон"><svg class="i" viewBox="0 0 16 16"><path class="r w2" d="M2 2l9 9"/><path class="k" d="M10 10l4 4"/><text class="t7 cb" x="1" y="15">L</text></svg></button>
  </div>
  <div class="grp lead">
    <button aria-label="Текст в круге"><svg class="i" viewBox="0 0 16 16"><circle class="k" cx="8" cy="8" r="6.500"/><path class="k" d="M5.500 12V6.500L8 4.500l2.500 2V12M6 9h4"/></svg></button>
    <button aria-label="Текст в рамке"><svg class="i" viewBox="0 0 16 16"><path class="k" d="M1.500 1.500h13v13h-13z"/><text class="serif" x="3" y="13">A</text></svg></button>
    <button aria-label="Текст ТК"><svg class="i" viewBox="0 0 16 16"><text class="t8 cr" x="1" y="9">ТК</text><path class="r w2" d="M1 14l6-2h8"/></svg></button>
    <button aria-label="Наклон текста"><svg class="i" viewBox="0 0 16 16"><text class="t7" x="0" y="7">TXT</text><path stroke="#777" stroke-width="1.500" d="M2 9l4 5M4 14l4-5M8 9l1 5M10 9l4 5M14 9l1 5"/></svg></button>
    <button aria-label="Выравнивание"><svg class="i" viewBox="0 0 16 16"><path class="k" stroke-width="1.500" d="M1 3h14M1 6h9M1 9h13M1 12h10M1 15h14"/></svg></button>
    <button aria-label="Обновить текст"><svg class="i" viewBox="0 0 16 16"><path class="r" stroke-width="4" stroke-dasharray="2 1" d="M2 3v13"/><path class="fw b" d="M6.500 6.500h9v9h-9zM8 9h6M8 11h6M8 13h6"/><path class="b w2" d="M4 3q5-4 8 1"/><path class="fk n" d="M9 3h6l-2 4z"/></svg></button>
    <button aria-label="Копия текста"><svg class="i" viewBox="0 0 16 16"><text class="t6" x="2" y="5">TXT</text><text class="t6 cr" x="0" y="10">COPY</text><text class="t6" x="4" y="16">TXT</text></svg></button>
    <button aria-label="Дата"><svg class="i" viewBox="0 0 16 16"><text class="t6" x="0" y="9">DATE</text><path class="r" d="M0 11.500h16"/></svg></button>
  </div>
</div>

<main class="work">
  <aside class="palette">
    <div class="phead"><button aria-label="Закрыть палитру"><svg class="x8" viewBox="0 0 8 8"><path class="k" stroke-width="1.500" d="M1.500 1.500l5 5M6.500 1.500l-5 5"/></svg></button></div>
    <div class="pbtns"><button>Заборы</button><button>ЛЭП</button><button>Штриховка</button><button>Сети</button><button>Блоки</button><button>Профиль</button></div>
    <div class="ptabs"><button class="on">Main</button><button>GeoApp</button></div>
    <div class="plist">
      <button aria-label="Газ сплошная"><svg class="row" viewBox="0 0 96 16"><g stroke="#58cdd4"><path d="M3 8.500h24M46 8.500h24"/></g><text fill="#58cdd4" x="34" y="13">Г</text></svg></button>
      <button aria-label="Газ пунктир"><svg class="row" viewBox="0 0 96 16"><g stroke="#36bfd4"><path d="M2 8.500h12M18 8.500h12M42 8.500h10M56 8.500h14"/><circle stroke-width="2" cx="85" cy="8" r="6.500"/><path stroke-width="2" d="M81 12l8-8"/></g><text fill="#36d0d8" x="34" y="13">Г</text></svg></button>
      <button aria-label="Водопровод"><svg class="row" viewBox="0 0 96 16"><g stroke="#32cd3c"><path d="M2 8.500h12M18 8.500h12M44 8.500h10M58 8.500h12"/><circle stroke-width="2" cx="85" cy="8" r="6.500"/><path stroke-width="2" d="M79 8h12"/></g><text fill="#32cd3c" x="32" y="13">В</text></svg></button>
      <button aria-label="Теплосеть"><svg class="row" viewBox="0 0 96 16"><g stroke="#1c1c9c"><path d="M3 8.500h11M18 8.500h12M44 8.500h8M56 8.500h14"/><circle stroke-width="2" cx="85" cy="8" r="6.500"/><path stroke-width="2" d="M79 7h12M85 7v7"/></g><text fill="#1c1ccc" x="34" y="13">Т</text></svg></button>
      <button aria-label="Канализация"><svg class="row" viewBox="0 0 96 16"><g stroke="#7a1a1a"><path d="M2 8.500h12M18 8.500h12M44 8.500h8M56 8.500h14"/></g><g stroke="#8a5412"><circle stroke-width="2" cx="85" cy="8" r="6.500"/><path stroke-width="1.500" d="M79 8h12M85 2v12"/></g><text fill="#7a1414" x="32" y="13">К</text></svg></button>
      <button aria-label="Канализация ливневая"><svg class="row" viewBox="0 0 96 16"><g stroke="#7a1a1a"><path d="M1 8.500h10M16 8.500h12M44 8.500h8M56 8.500h14"/></g><g stroke="#8a5412"><circle stroke-width="2" cx="85" cy="8" r="6.500"/><path stroke-width="2" d="M79 6h12M79 10h12"/></g><text fill="#7a1414" x="28" y="13">Кл</text></svg></button>
      <button aria-label="Дренаж"><svg class="row" viewBox="0 0 96 16"><g stroke="#7a1a1a"><path d="M1 8.500h10M16 8.500h12M44 8.500h8M56 8.500h14"/></g><g stroke="#8a5412"><circle stroke-width="2" cx="85" cy="8" r="6.500"/><path stroke-width="1.500" d="M79 6h12M79 10h12M83 2v12M87 2v12"/></g><text fill="#9a2020" x="28" y="13">Др</text></svg></button>
      <button aria-label="Канализация напорная"><svg class="row" viewBox="0 0 96 16"><g stroke="#7a1a1a"><path d="M2 8.500h10M16 8.500h12M46 8.500h8M58 8.500h13"/></g><text fill="#7a1414" x="29" y="13">Кн</text></svg></button>
      <button aria-label="Кабель"><svg class="row" viewBox="0 0 96 16"><g stroke="#c832c8"><path d="M2 7.500h30M40 7.500h30"/><circle stroke-width="2" cx="85" cy="8" r="6.500"/><path stroke-width="2" d="M85 2v6l-5 4M85 8l5 4"/><path fill="#c832c8" d="M13 7.500l2-2 2 2-2 2zM53 7.500l2-2 2 2-2 2z"/></g></svg></button>
      <button aria-label="Кабель силовой"><svg class="row" viewBox="0 0 96 16"><g stroke="#c42a2a"><path d="M4 7.500h5M18 7.500h36M63 7.500h4"/><circle stroke-width="2" cx="85" cy="8" r="6.500"/><path stroke-width="2" d="M80 11l5-4 5 4"/><path fill="#c42a2a" d="M18 7.500l3-2v4zM54 7.500l-3-2v4z"/></g></svg></button>
      <button aria-label="Кабель высоковольтный"><svg class="row" viewBox="0 0 96 16"><g stroke="#c42a2a"><path d="M4 7.500h5M18 7.500h36M63 7.500h4"/><path fill="#c42a2a" d="M17 7.500l3-2v4zM55 7.500l-3-2v4zM20 7.500l3-2v4zM52 7.500l-3-2v4z"/></g></svg></button>
      <span class="pgap"></span>
      <button aria-label="Ограда каменная"><svg class="row" viewBox="0 0 96 16"><path class="k" d="M13 6.500h68M13 9.500h68M27.500 6v4M45.500 6v4M64.500 6v4"/></svg></button>
      <button aria-label="Ограда с засечками"><svg class="row" viewBox="0 0 96 16"><path class="k" d="M13 7.500h67M20.500 4v3M36.500 4v3M54.500 4v3M71.500 4v3"/></svg></button>
      <button aria-label="Ограда металлическая"><svg class="row" viewBox="0 0 96 16"><path class="k" d="M13 7.500h67M23.500 3v4M46.500 3v4M69.500 3v4"/><circle class="fk n" cx="23.500" cy="7.500" r="3"/><circle class="fk n" cx="46.500" cy="7.500" r="3"/><circle class="fk n" cx="69.500" cy="7.500" r="3"/></svg></button>
      <button aria-label="Ограда деревянная"><svg class="row" viewBox="0 0 96 16"><path class="k" d="M13 7.500h67M24.500 2v4M45.500 2v4M66.500 2v4"/><path class="fw k" d="M22.500 5.500h4v4h-4zM43.500 5.500h4v4h-4zM64.500 5.500h4v4h-4z"/></svg></button>
      <button aria-label="Ограда проволочная"><svg class="row" viewBox="0 0 96 16"><path class="k" d="M13 7.500h67M21 3l4 4 4-4M42 12l4-4 4 4M62 3l4 4 4-4"/></svg></button>
      <span class="pgap"></span>
      <button aria-label="Линия сплошная"><svg class="row" viewBox="0 0 96 16"><path class="k w2" d="M14 8h65"/></svg></button>
      <button aria-label="Линия пунктирная"><svg class="row" viewBox="0 0 96 16"><path class="k" stroke-dasharray="11 3" d="M16 9.500h64"/></svg></button>
      <button aria-label="Линия точечная"><svg class="row" viewBox="0 0 96 16"><path class="k w2" stroke-dasharray="2 5" d="M21 8h53"/></svg></button>
      <button aria-label="Железная дорога"><svg class="row" viewBox="0 0 96 16"><path class="k" d="M14 4.500h65M14 13.500h65M18.500 3v12M45.500 3v12M73.500 3v12"/></svg></button>
      <button aria-label="Узкоколейка"><svg class="row" viewBox="0 0 96 16"><path class="k" d="M14 6.500h65M14 11.500h65M18.500 4v9M45.500 4v9M73.500 4v9"/></svg></button>
      <div class="ptools">
        <button aria-label="Угол"><svg class="i" viewBox="0 0 16 16"><path class="k" stroke-width="1.500" d="M10 1L1 8l6 6"/><path class="r w2" d="M8 2l3-1M0 7v3M6 13l3 2"/></svg></button>
        <button aria-label="Площадь фигуры"><svg class="i" viewBox="0 0 16 16"><path class="k" stroke-width="1.500" d="M1 9l9-8 5 5-8 9z"/><path class="r" stroke-width="1.500" d="M1 10V0M6 15l2-2"/></svg></button>
        <button aria-label="Высоты"><svg class="g20" viewBox="0 0 20 20"><text class="t9 thin" x="9" y="8">h1</text><text class="t9 thin" x="9" y="19">h2</text><path class="k" d="M0 19L9 9.500h11"/></svg></button>
        <button aria-label="Расстояние"><svg class="i" viewBox="0 0 16 16"><path class="k" d="M2 14L14 2M9 2h5v5M2 9v5h5"/></svg></button>
        <button class="tx">L</button><button class="tx">ΣS</button><button class="tx">ΣL</button><button class="tx">Txt</button>
        <button aria-label="Настройки"><svg class="g20" viewBox="0 0 20 20"><circle stroke="#3aa648" stroke-width="5" stroke-dasharray="3 1.500" cx="7" cy="7" r="5"/><circle stroke="#3aa648" stroke-width="4" cx="7" cy="7" r="4"/><circle stroke="#d29322" stroke-width="4" stroke-dasharray="3 1.500" cx="14" cy="14" r="4.500"/><circle stroke="#e0a63a" stroke-width="3" cx="14" cy="14" r="3"/></svg></button>
        <button aria-label="Вставить чертеж"><svg class="g20" viewBox="0 0 20 20"><path fill="#eef4fa" stroke="#5578a0" d="M.5 2.500h10v12H.5zM2 5h7M2 7h7M2 9h7"/><path fill="#2b5f92" stroke="#345" d="M7.500 7.500h12v12h-12z"/><path fill="#ffd42e" class="n" d="M8 15l11-4v8H8z"/><path stroke="#a07028" stroke-width="2" d="M3 2h5"/></svg></button>
        <button aria-label="Копировать текст"><svg class="g20" viewBox="0 0 20 20"><path fill="#2b5f92" stroke="#345" d="M.5.500h11v14H.5z"/><path fill="#ffd42e" class="n" d="M1 8l10-4v10H1z"/><path fill="#eef4fa" stroke="#5578a0" d="M8.500 4.500h10v15h-10zM10 7h7M10 9h7M10 11h7M10 13h7M10 15h7M10 17h7"/></svg></button>
        <button aria-label="Стереть"><svg class="g20" viewBox="0 0 20 20"><path class="w2" stroke="#7a4428" d="M16 3L9 11"/><path fill="#e58d78" stroke="#555" d="M4 13l5-4 2 3-5 4z"/><path class="k" d="M2 17.500h14"/></svg></button>
      </div>
    </div>
    <button class="esc">Esc</button>
  </aside>

  <div class="right">
    <div class="area">
      <div class="col">
        <div class="vgrp">
          <button aria-label="Линейный размер"><svg class="i" viewBox="0 0 16 16"><use href="#dim"/></svg></button>
          <button aria-label="Параллельный размер"><svg class="i" viewBox="0 0 16 16"><path class="k" stroke-width="1.500" d="M0 5l4-4M11 15l5-5M3 4l10 9"/><path class="fk n" d="M2 3l5 1-3 4zM14 13l-5-1 3-4z"/></svg></button>
          <button aria-label="Длина дуги"><svg class="i" viewBox="0 0 16 16"><path class="k" d="M1 14Q2 3 14 2M6 14q1-7 9-7"/><path class="fb n" d="M0 12h3v3H0zM13 0h3v3h-3z"/><path class="fk n" d="M15 6l-4 0 2 4zM5 15l0-5 3 2z"/></svg></button>
          <button aria-label="Ординатный размер"><svg class="i" viewBox="0 0 16 16"><path class="k" d="M5.500 16V6l5 3 5-3v10M8 14v2M4 13h8"/><path class="b" d="M0 4l2 2 2-2M2 6v3M13 0l2 3M15 0l-2 3M6 1h2v2H6zM1 13h2v2H1z"/></svg></button>
          <span class="hsep"></span>
          <button aria-label="Радиус"><svg class="i" viewBox="0 0 16 16"><circle stroke="#555" cx="8" cy="8" r="7.500"/><path class="k" d="M3 4l6 5"/><path class="fk n" d="M2 3l5 1-3 4z"/></svg></button>
          <button aria-label="Радиус с изломом"><svg class="i" viewBox="0 0 16 16"><path stroke="#666" d="M2 4q5-5 10-2 4 4 2 8"/><path class="k" stroke-width="1.500" d="M6 15l4-5-4-1 6-6"/><path class="fk n" d="M13 1v6l-5-4z"/></svg></button>
          <button aria-label="Диаметр"><svg class="i" viewBox="0 0 16 16"><circle stroke="#555" cx="8" cy="8" r="7.500"/><path class="k" d="M4 4l8 8"/><path class="fk n" d="M2 3l5 1-3 4zM14 13l-5-1 3-4z"/></svg></button>
          <button aria-label="Угловой размер"><svg class="i" viewBox="0 0 16 16"><path class="k" d="M0 14.500h16M1 14L10 1"/><path class="k" d="M8 4q6 2 5 10"/><path class="fk n" d="M7 3h5l-2 4zM13 14l-2-4h4z"/></svg></button>
          <span class="hsep"></span>
          <button aria-label="Быстрый размер"><svg class="i" viewBox="0 0 16 16"><use href="#dimtop"/><path fill="#f4e12c" stroke="#5d5910" d="M4 3l9 4-2 9-2-5-3 2z"/><path class="k" d="M.5 6v9M15.500 6v9"/></svg></button>
          <button aria-label="Базовый размер"><svg class="i" viewBox="0 0 16 16"><path class="k" d="M.5 0v16M10.500 8v8M15.500 0v5M1 2.500h14M1 10.500h9"/><path class="fk n" d="M1 2.500l3-2v4zM15 2.500l-3-2v4zM1 10.500l3-2v4zM10 10.500l-3-2v4z"/></svg></button>
          <button aria-label="Размерная цепь"><svg class="i" viewBox="0 0 16 16"><path class="k" d="M.5 0v16M8 0v16M15.500 0v16M1 5h14"/><path class="fk n" d="M1 5l3-2v4zM15 5l-3-2v4zM8 5L5 3v4zM8 5l3-2v4z"/></svg></button>
          <button aria-label="Расстояние между размерами"><svg class="i" viewBox="0 0 16 16"><path class="k" d="M.5 0v5M15.500 0v5M.5 11v5M15.500 11v5M1 2.500h14M1 13.500h14"/><path fill="#f0c030" stroke="#7c5b10" d="M5 4.500h7v7H5zM9 4v8M5 8h6"/></svg></button>
          <button aria-label="Разрыв размера"><svg class="i" viewBox="0 0 16 16"><path class="k" stroke-width="1.500" d="M8 1v13"/><path class="b" stroke-width="1.500" d="M0 6h5M11 6h5M13 4l-2 2 2 2"/><path class="fk n" d="M5 12h6l-3 4z"/></svg></button>
          <span class="hsep"></span>
          <button aria-label="Допуск"><svg class="i" viewBox="0 0 16 16"><path class="fl b" d="M.5 3.500h15v10H.5zM8.500 3v11M4.500 4v9M1 8.500h7"/><circle class="b" cx="4.500" cy="8.500" r="2"/><path class="k" d="M13 6v5M10 11h1"/></svg></button>
          <button aria-label="Маркер центра"><svg class="i" viewBox="0 0 16 16"><circle stroke="#444" cx="8" cy="8" r="7.500"/><path class="k" stroke-width="1.500" d="M8 5v6M5 8h6"/></svg></button>
          <button aria-label="Контроль"><svg class="i" viewBox="0 0 16 16"><use href="#dimtop"/><circle fill="#54a832" stroke="#2d7012" cx="9" cy="10" r="4.500"/><path class="w" stroke-width="1.500" d="M6.500 10l2 2 4-4"/></svg></button>
          <button aria-label="Излом линейный"><svg class="i" viewBox="0 0 16 16"><path class="k" d="M.5 4v9M1 8.500h5l2-4 3 8 3-9 2 4"/><path class="fk n" d="M1 8.500l3-2v4z"/></svg></button>
          <span class="hsep"></span>
          <button aria-label="Текст размера"><svg class="i" viewBox="0 0 16 16"><use href="#dimlow"/><path class="b w2" d="M4 9l4-8 4 8M5 6h6"/></svg></button>
          <button aria-label="Редактировать размер"><svg class="i" viewBox="0 0 16 16"><use href="#dimlow"/><path stroke="#c0872c" stroke-width="2.500" d="M13 1L6 8"/><path class="fk n" d="M5 7l2 2-4 2z"/></svg></button>
          <button aria-label="Обновить размер"><svg class="i" viewBox="0 0 16 16"><path class="b" stroke-width="1.500" d="M2.500 0v7M15 0v12M3 3h12"/><path class="k" d="M.5 4v12M12.500 4v12M1 8.500h11"/><path class="fk n" d="M1 8.500l3-2v4zM12 8.500l-3-2v4z"/></svg></button>
          <span class="hsep"></span>
          <button aria-label="Размерные стили"><svg class="i" viewBox="0 0 16 16"><use href="#dimlow"/><path class="w2" stroke="#4f3c28" d="M15 0L8 7"/><path class="fk n" d="M9 5L3 12l7-4z"/></svg></button>
        </div>
        <div class="vgrp fill"><button aria-label="Перемычка"><svg class="i" viewBox="0 0 16 16"><path class="k w2" d="M3 14V3h10v11"/></svg></button></div>
      </div>
      <div class="col">
        <div class="vgrp">
          <button aria-label="Отрезок"><svg class="i" viewBox="0 0 16 16"><path class="k" d="M2 14L14 2"/><path class="fb n" d="M1 12h3v3H1zM12 1h3v3h-3z"/></svg></button>
          <button aria-label="Прямая"><svg class="i" viewBox="0 0 16 16"><path class="k" d="M1 15L15 1"/><path class="fk n" d="M0 16l1-4 3 3zM16 0l-1 4-3-3z"/><path class="fb n" d="M7 7h3v3H7z"/></svg></button>
          <button aria-label="Полилиния"><svg class="i" viewBox="0 0 16 16"><path class="k" d="M2 12.500h9q4 0 4-4t-4-4"/><path class="fb n" d="M0 11h3v3H0zM9 3h3v3H9zM9 11h3v3H9z"/></svg></button>
          <button aria-label="Эскиз"><svg class="i" viewBox="0 0 16 16"><path fill="#ddd" stroke="#999" d="M1 15l3-7h8l3 7z"/><path class="k" d="M4 5q2-5 7-3 2 2-2 3t-3 1q5-1 6 1t-3 3-4 0q3-2 6-1 3 2 1 3"/></svg></button>
          <button aria-label="Многоугольник"><svg class="i" viewBox="0 0 16 16"><path class="fl" stroke="#345" stroke-width="1.500" d="M8 2l6 5-2 7H4L2 7z"/></svg></button>
          <button aria-label="Прямоугольник"><svg class="i" viewBox="0 0 16 16"><path class="fl k" d="M1.500 4.500h13v8h-13z"/><path class="fb n" d="M0 11h3v3H0zM13 3h3v3h-3z"/></svg></button>
          <button aria-label="Дуга по точкам"><svg class="i" viewBox="0 0 16 16"><path class="b" d="M2 14Q3 3 14 2"/><path class="fb n" d="M0 13h3v3H0zM4 5h3v3H4zM13 0h3v3h-3z"/></svg></button>
          <button aria-label="Круг"><svg class="i" viewBox="0 0 16 16"><circle class="fl" stroke="#246" stroke-width="1.500" cx="8" cy="8" r="7"/><path class="b" d="M8 9l4-4"/><path class="fb n" d="M6 7h3v3H6z"/></svg></button>
          <button aria-label="Облако"><svg class="i" viewBox="0 0 16 16"><path class="fl k" d="M4 6Q2 1 7 1q4 0 4 3 4 0 4 4-1 2-3 2 3 1 2 4-3 2-6 0-2 1-4-1 0-2 1-3-4 0-4-3 1-2 3-1z"/></svg></button>
          <button aria-label="Сплайн"><svg class="i" viewBox="0 0 16 16"><path class="k" d="M1 14Q1 6 5 7t6 1q4-2 4-7"/></svg></button>
          <button aria-label="Эллипс"><svg class="i" viewBox="0 0 16 16"><ellipse class="fl k" cx="8" cy="8" rx="7" ry="4.500"/><path class="fb n" d="M6.500 2h3v3h-3zM6.500 11h3v3h-3zM0 7h3v3H0zM13 7h3v3h-3z"/></svg></button>
          <button aria-label="Эллиптическая дуга"><svg class="i" viewBox="0 0 16 16"><path class="fl b" d="M2 10Q-1 5 5 4q8-1 10 3 1 5-7 6"/><path class="fb n" d="M1 9h3v3H1zM7 11h3v3H7z"/></svg></button>
          <button aria-label="Вставить блок"><svg class="i" viewBox="0 0 16 16"><path class="fl b" d="M5.500.500h9v12h-9z"/><use href="#shapes"/><path class="fk n" d="M16 12v4h-4z"/></svg></button>
          <button aria-label="Создать блок"><svg class="i" viewBox="0 0 16 16"><use href="#shapes"/></svg></button>
          <button aria-label="Точка"><svg class="i" viewBox="0 0 16 16"><path class="fb n" d="M7 7h3v3H7z"/></svg></button>
          <button aria-label="Штриховка контура"><svg class="i" viewBox="0 0 16 16"><path class="fl b" d="M2.500 3.500h11v10h-11z"/><path class="b" d="M3 0v16M13 0v16M0 4h16M0 13h16M3 8l6 5M5 4l8 8M9 4l4 4"/></svg></button>
          <button aria-label="Градиент"><svg class="i" viewBox="0 0 16 16"><path fill="#3b4a54" class="n" d="M2 3h12v11H2z"/><path fill="#9a9a60" class="n" d="M4 8h6v5H4z"/><path stroke="#142a52" stroke-width="1.500" d="M3 0v16M13 0v16M0 4h16M0 13h16"/></svg></button>
          <button aria-label="Область"><svg class="i" viewBox="0 0 16 16"><path class="fl b" d="M.5 2.500h10l5 5v7H.5z"/><circle class="fw b" cx="7.500" cy="8.500" r="3"/></svg></button>
          <button aria-label="Таблица чертежа"><svg class="i" viewBox="0 0 16 16"><path class="fw b" d="M1.500 2.500h13v12h-13zM1 6h14M1 10h14M5.500 3v12M10 3v12"/><path fill="#4c86c0" class="n" d="M1 2h14v3H1z"/></svg></button>
          <button aria-label="Многострочный текст"><svg class="i" viewBox="0 0 16 16"><path class="k" stroke-width="1.700" d="M3 14L8 2l5 12M5 10h6"/></svg></button>
        </div>
        <div class="vgrp fill">
          <button aria-label="Рука"><svg class="i" viewBox="0 0 16 16"><use href="#hand"/></svg></button>
          <button aria-label="Площадь S"><svg class="i" viewBox="0 0 16 16"><text class="t8 thin" x="0" y="6">S=</text><path fill="#ffe81c" class="r" d="M1 14.500l8-8q4 1 6 8z"/></svg></button>
          <button aria-label="Параметры"><svg class="i" viewBox="0 0 16 16"><circle class="k" stroke-width="2" stroke-dasharray="2.500 3" cx="8" cy="8" r="7"/><circle fill="#f0f0f0" class="k" cx="8" cy="8" r="6"/><circle class="k" cx="8" cy="8" r="3.500"/></svg></button>
        </div>
      </div>

      <section class="doc">
        <div class="dtabs"><button class="on">Чертеж1.dwg</button><button>Чертеж2.dwg</button><button>Чертеж3.dwg</button></div>
        <div class="view">
          <div class="canvas">
            <svg class="ucs" viewBox="0 0 90 90"><g stroke="#fff"><path d="M5.500 75.500h9v9h-9zM10.500 75V26M15 80.500h38M10.500 16l-4 11h8zM64 80.500l-11-4v8zM7 1l4 6 4-6M11 7v6M80 76l7 10M87 76l-7 10"/></g></svg>
            <form class="dialog">
              <div class="dhead"><h2>Спецкалькулятор VetCAD++</h2><button type="button" aria-label="Закрыть окно"><svg class="i" viewBox="0 0 16 16"><path class="w w2" d="M5 5l6 6M11 5l-6 6"/></svg></button></div>
              <div class="dbody">
                <div class="dleft">
                  <div class="tabs"><button type="button" class="on">Блоки</button><button type="button">Длины</button><button type="button">Текст</button><button type="button">Площадь</button></div>
                  <div class="panel">
                    <div class="prow p1"><label><input type="radio" name="m" checked>Все блоки</label></div>
                    <div class="prow p2"><label><input type="radio" name="m">Блок с именем</label><span class="combo c166"><select aria-label="Имя блока"><option>_Oblique</option></select></span><button type="button" class="dots" disabled>...</button></div>
                    <div class="prow p3"><label><input type="radio" name="m">Позиция-атрибут</label><span class="combo off c159"><select aria-label="Атрибут позиции" disabled></select></span></div>
                    <div class="prow p4"><label class="dis"><input type="checkbox" disabled>Количество</label><span class="combo off c159"><select aria-label="Атрибут количества" disabled></select></span></div>
                  </div>
                  <fieldset>
                    <legend>Свойства</legend>
                    <div class="frow"><label><input type="checkbox">Слой</label><span class="combo"><select aria-label="Значение слоя"><option>0</option></select></span><button type="button" class="btn small">С объекта</button></div>
                    <div class="frow"><label><input type="checkbox">Цвет</label><span class="combo"><svg class="i pre" viewBox="0 0 16 16"><path class="fw k" d="M5.500 3.500h10v9h-10z"/></svg><select aria-label="Значение цвета" class="in16"><option>Поблоку</option></select></span></div>
                    <div class="frow"><label><input type="checkbox">Тип линии</label><span class="combo"><select aria-label="Значение типа линии"><option>ByBlock</option></select></span></div>
                    <div class="frow"><label><input type="checkbox">Вес</label><span class="combo"><svg class="ln pre" viewBox="0 0 66 4"><path class="k" d="M9 1.500h37"/></svg><select aria-label="Значение веса" class="in50"><option>Поблоку</option></select></span></div>
                  </fieldset>
                  <label class="lock"><input type="checkbox">Не считать объекты на заблокированных слоях</label>
                </div>
                <div class="dright">
                  <button type="button" class="btn def">Выбрать объекты</button>
                  <button type="button" class="btn">Из всего чертежа</button>
                  <button type="button" class="btn">Отмена</button>
                  <label class="num">Масштаб<input type="text" value="1"></label>
                  <label class="num">Высота текста<input type="text" value="3"></label>
                </div>
              </div>
            </form>
          </div>
          <div class="vscroll"><button class="up" aria-label="Вверх"></button><span class="thumb"></span><button class="down" aria-label="Вниз"></button></div>
        </div>
        <div class="sheets">
          <div class="nav"><button aria-label="Первый лист"><svg viewBox="0 0 14 14"><path d="M3 3v8M11 3v8L6 7z"/></svg></button><button aria-label="Предыдущий лист"><svg viewBox="0 0 14 14"><path d="M9 3v8L5 7z"/></svg></button><button aria-label="Следующий лист"><svg viewBox="0 0 14 14"><path d="M5 3v8l4-4z"/></svg></button><button aria-label="Последний лист"><svg viewBox="0 0 14 14"><path d="M11 3v8M3 3v8l5-4z"/></svg></button></div>
          <div class="stabs"><button class="on">Модель</button><button>Лист1</button><button>Лист2</button></div>
          <div class="hscroll"><button class="left" aria-label="Влево"></button><span class="hthumb"></span><button class="rt" aria-label="Вправо"></button></div>
        </div>
      </section>

      <div class="col">
        <div class="vgrp">
          <button aria-label="Ластик"><svg class="i" viewBox="0 0 16 16"><path stroke="#d8a23c" stroke-width="3" d="M15 1L8 8"/><path fill="#e88a80" class="b" d="M3 11l5-5 3 3-5 5z"/><path class="k" d="M0 15.500h16"/></svg></button>
          <button aria-label="Копировать объекты"><svg class="i" viewBox="0 0 16 16"><circle class="fl k" cx="3.500" cy="5" r="3"/><circle class="fl k" cx="7" cy="10" r="3"/><circle class="fl k" cx="12" cy="12" r="3.500"/><path class="b w2" d="M6 2q7-2 7 4"/><path class="fb n" d="M10 4h6l-3 4z"/></svg></button>
          <button aria-label="Зеркало"><svg class="i" viewBox="0 0 16 16"><path class="fl k" d="M6 3v10H1zM10 3v10h5z"/><path class="b" d="M8 0v16"/></svg></button>
          <button aria-label="Подобие"><svg class="i" viewBox="0 0 16 16"><path class="fl b" stroke-width="1.500" d="M2 13.500q-3-5 3-6-1-6 4-6t4 6q4 1 2 6z"/><path class="k" d="M4 11.500q0-2 4-2-1-5 1-5t2 4q3 1 2 3z"/></svg></button>
          <button aria-label="Массив"><svg class="i" viewBox="0 0 16 16"><path class="fl k" d="M.5.500h6v6h-6zM9.500.500h6v6h-6zM.5 9.500h6v6h-6zM9.500 9.500h6v6h-6z"/></svg></button>
          <button aria-label="Перенести"><svg class="i" viewBox="0 0 16 16"><path class="st w2" d="M8 2v12M2 8h12"/><path class="fst n" d="M8 0l4 4H4zM8 16l4-4H4zM0 8l4-4v8zM16 8l-4-4v8z"/></svg></button>
          <button aria-label="Повернуть"><svg class="i" viewBox="0 0 16 16"><path class="st" stroke-width="2.500" d="M11 3q4 2 3.500 6-1 5-6.500 5.500Q2 14 1.500 9 2 4 6 3"/><path class="fst n" d="M1 0l8 1-4 6z"/></svg></button>
          <button aria-label="Масштаб объекта"><svg class="i" viewBox="0 0 16 16"><path class="fl st" d="M.5.500h15v15H.5z"/><path class="fw k" stroke-dasharray="1.500 1.500" d="M.5 7.500h8v8h-8z"/></svg></button>
          <button aria-label="Растянуть"><svg class="i" viewBox="0 0 16 16"><path class="fl k" d="M.5 1.500h5v14h-5zM8 1l7 14.500H6"/><path class="k" stroke-dasharray="1 1" d="M7 1v15"/></svg></button>
          <button aria-label="Обрезать"><svg class="i" viewBox="0 0 16 16"><path class="k" d="M0 8h6"/><path class="b" stroke-width="1.500" d="M4 13l6-10"/><path class="b" stroke-dasharray="2 1" d="M9 8h7"/></svg></button>
          <button aria-label="Удлинить"><svg class="i" viewBox="0 0 16 16"><path class="k" d="M0 9h5"/><path class="b" stroke-dasharray="2 1" d="M5 9h6"/><path class="b" stroke-width="1.500" d="M10 14l5-10"/></svg></button>
          <button aria-label="Разорвать в точке"><svg class="i" viewBox="0 0 16 16"><path class="fl k" d="M.5 3.500h15v10H.5z"/><path class="fb n" d="M9 2h3v3H9z"/></svg></button>
          <button aria-label="Разорвать"><svg class="i" viewBox="0 0 16 16"><path class="fl n" d="M1 4h14v10H1z"/><path class="k" d="M4 3.500H.5v10h15v-10H12"/><path class="fb n" d="M3 2h3v3H3zM10 2h3v3h-3z"/></svg></button>
          <button aria-label="Соединить"><svg class="i" viewBox="0 0 16 16"><path class="k" d="M0 9h16"/><path class="fb n" d="M3 5l5 4-5 4zM13 5L8 9l5 4z"/></svg></button>
          <button aria-label="Фаска"><svg class="i" viewBox="0 0 16 16"><path class="k" stroke-width="1.500" d="M1 16V8M8 1h8"/><path class="k" stroke-dasharray="1 1" d="M1 8V1h7"/><path class="b" stroke-width="1.500" d="M1 9l8-8"/></svg></button>
          <button aria-label="Сопряжение"><svg class="i" viewBox="0 0 16 16"><path class="k" stroke-width="1.500" d="M1 16v-6M10 1h6"/><path class="k" stroke-dasharray="1 1" d="M1 8V1h7"/><path class="b w2" d="M1 11q1-9 10-10"/></svg></button>
          <button aria-label="Расчленить"><svg class="i" viewBox="0 0 16 16"><path fill="#f4b73a" stroke="#c3401c" stroke-width="1.500" stroke-dasharray="3 1" d="M1 9l2-4 3 2 3-2v5l3 2-4 1-2 3-2-3-3 1z"/><path class="g" stroke-dasharray="2 1" d="M9 4l6-4M10 6l6-1M12 1l3 6"/><path fill="#8b2a12" class="n" d="M5 8h3v3H5z"/></svg></button>
        </div>
        <div class="vgrp">
          <button aria-label="На передний план"><svg class="i" viewBox="0 0 16 16"><path class="fl st" d="M.5.500h6v6h-6zM9.500 9.500h6v6h-6z"/><path class="fst st" d="M3.500 3.500h9v9h-9z"/></svg></button>
          <button aria-label="На задний план"><svg class="i" viewBox="0 0 16 16"><path class="fst st" d="M3.500 3.500h9v9h-9z"/><path class="fl st" d="M.5.500h7v6h-7zM7.500 9.500h8v6h-8z"/></svg></button>
          <button aria-label="Перед объектом"><svg class="i" viewBox="0 0 16 16"><path class="fl st" d="M5.500 6.500h10v8h-10z"/><path class="fst st" d="M1.500 1.500h11v9h-11z"/></svg></button>
          <button aria-label="За объектом"><svg class="i" viewBox="0 0 16 16"><path class="fst st" d="M1.500 1.500h11v9h-11z"/><path class="fl st" d="M5.500 6.500h10v8h-10z"/></svg></button>
        </div>
      </div>
      <div class="col">
        <div class="vgrp">
          <button aria-label="Центр"><svg class="i" viewBox="0 0 16 16"><circle class="k" cx="8" cy="8" r="7"/><circle class="k" cx="8" cy="8" r="3.500"/><path class="k" d="M8 0v16M0 8h16"/></svg></button>
          <button aria-label="Разметка текста"><svg class="i" viewBox="0 0 16 16"><path class="k" d="M1.500 0v14.500H16"/><text class="t6" x="3" y="5">T</text><text class="t6" x="3" y="13">T</text><text class="t6" x="11" y="13">T</text></svg></button>
          <button aria-label="Быстрый выбор"><svg class="i" viewBox="0 0 16 16"><path class="st w2" d="M1 4q4-5 6 0 0 2-3 4v2M4 12v2"/><path class="b" d="M12.500 1v14M8 8.500h8"/><path class="fw b" d="M10.500 6.500h4v4h-4z"/></svg></button>
          <button aria-label="DWF"><svg class="i" viewBox="0 0 16 16"><path class="fw" stroke="#8a2a9a" d="M1.500.500h9l5 5v10h-14z"/><text class="t6" fill="#6a1a8a" x="2" y="14">DWF</text><path stroke="#8a2a9a" d="M4 7V3h3v4"/></svg></button>
          <button aria-label="Выбор объекта"><svg class="i" viewBox="0 0 16 16"><path class="r" stroke-width="1.500" d="M3 2h10v8H7"/><circle fill="#dcc7cb" stroke="#a77" cx="12" cy="12" r="3.500"/><path class="fw k" d="M1 0v11l3-3 4 5 1-2-3-4h3z"/></svg></button>
        </div>
        <div class="vgrp">
          <button aria-label="Лист под лупой"><svg class="i" viewBox="0 0 16 16"><use href="#lens"/><path class="fw b" d="M4.500 3.500h3l2 2v4h-5z"/></svg></button>
          <button aria-label="Таблица и документ"><svg class="i" viewBox="0 0 16 16"><path class="fl b" d="M6.500.500h9v5h-9zM7 3h9M11 1v5M.5 7.500h6l2 2v6h-8z"/><path class="b" d="M10 13q5 0 4-5M12 10l2-3 2 3"/></svg></button>
          <button aria-label="Экспорт MN"><svg class="i" viewBox="0 0 16 16"><path fill="#e3a060" stroke="#6b3a10" d="M.5 1.500h9v5h-9zM.5 7.500h15v8H.5z"/><text class="t7" x="2" y="14">MN</text><path stroke="#b04a10" stroke-width="1.500" d="M5 4h10M12 1l3 3-3 3"/></svg></button>
          <button aria-label="Узел"><svg class="i" viewBox="0 0 16 16"><path class="k" stroke-width="1.500" d="M8 1v9M0 14l7-3M16 14l-7-3"/><circle class="fw b" cx="8" cy="11" r="2"/></svg></button>
          <button aria-label="Группа фигур"><svg class="i" viewBox="0 0 16 16"><path class="fl b" d="M5.500.500h9v12h-9z"/><use href="#shapes"/></svg></button>
        </div>
        <div class="vgrp">
          <button aria-label="Порядок вершин"><svg class="i" viewBox="0 0 16 16"><path stroke="#28289a" stroke-dasharray="3 1" d="M2 2h12v12H2z"/><path fill="#a81c3c" class="n" d="M0 12h4v4H0zM12 0h4v4h-4zM12 12h4v4h-4z"/><text class="t6" x="8" y="6">3</text><text class="t6" x="4" y="13">1 2</text></svg></button>
          <button aria-label="Красные зигзаги"><svg class="i" viewBox="0 0 16 16"><path stroke="#a01c3c" stroke-width="1.500" d="M3 1l2 4-4 4 3 3-2 4M9 1l1 4-4 4 3 3-2 4M15 1l0 4-4 4 3 3-2 4"/></svg></button>
          <button aria-label="Ромбы"><svg class="i" viewBox="0 0 16 16"><path class="r" fill="#f7e2e2" d="M8 0l8 8-8 8-8-8z"/><path class="k" stroke-dasharray="1.500 1" d="M4 4l8 8M12 4l-8 8M4 12l4 4 8-8"/></svg></button>
        </div>
        <div class="vgrp">
          <button aria-label="Калькулятор серый"><svg class="i" viewBox="0 0 16 16"><path fill="#777" class="k" d="M.5 1.500h15v14H.5z"/><path class="fw n" d="M3 3h10v3H3z"/><path class="k w2" stroke-dasharray="2 1" d="M3 9h11M3 12h11"/></svg></button>
          <button aria-label="Сумма темная"><svg class="i" viewBox="0 0 16 16"><path fill="#dcefee" class="n" d="M0 0h16v16H0z"/><path stroke="#17505a" stroke-width="1.500" d="M13 4V2H2l6 6-6 6h11v-2"/></svg></button>
          <button aria-label="Калькулятор голубой"><svg class="i" viewBox="0 0 16 16"><rect fill="#25c5cc" stroke="#0b6a72" stroke-width="1.500" x="2" y="1" width="12" height="14" rx="2"/><path stroke="#0b6a72" d="M4 4h8M6 7v6M8 7v6M10 7v6"/></svg></button>
          <button aria-label="Сумма синяя"><svg class="i" viewBox="0 0 16 16"><path fill="#d4f0f8" class="n" d="M0 0h16v16H0z"/><path stroke="#1a50a8" stroke-width="1.500" d="M13 4V2H3l5 6-5 6h10v-2"/></svg></button>
          <button aria-label="Калькулятор черный"><svg class="i" viewBox="0 0 16 16"><path class="fk n" d="M2 0h12v16H2z"/><path fill="#16308a" class="n" d="M3 1h10v3H3z"/><path stroke="#fff" stroke-width="2" stroke-dasharray="2 1" d="M4 10h8M4 13h8"/><path class="r w2" stroke-dasharray="2 1" d="M4 7h8"/></svg></button>
        </div>
      </div>
    </div>
    <div class="cmd"><input type="text" aria-label="Командная строка"></div>
  </div>
</main>

<footer class="status">
  <output class="coords">2706.35, 1865.39, 0.00</output>
  <button>ШАГ</button><button>СЕТКА</button><button>ОРТО</button><button class="down">ОТС-ПОЛЯР</button><button class="down">ПРИВЯЗКА</button><button class="down">ОТС-ОБЪЕКТ</button><button class="down">ДПСК</button><button class="down">ДИН</button><button>ВЕС</button>
  <div class="tray">
    <span>Масштаб аннотаций:</span><button class="scale">1:10 <i class="tri"></i></button>
    <button aria-label="Видимость аннотаций"><svg class="i" viewBox="0 0 16 16"><path class="fl b" d="M2 14L8 4l4 10-4-3zM8 4v7"/><circle fill="#f5d33a" stroke="#d8c060" cx="12" cy="4" r="3"/></svg></button>
    <button aria-label="Автомасштаб"><svg class="i" viewBox="0 0 16 16"><path fill="#ccc" stroke="#999" d="M2 14L8 4l4 10-4-3z"/><path fill="#aaa" stroke="#888" d="M15 1L8 7h4l-3 5 6-6h-3z"/></svg></button>
    <button class="boxed" aria-label="Блокировка"><svg class="i" viewBox="0 0 16 16"><path stroke="#667" class="w2" d="M4 8V4q0-3 4-3t4 3v4"/><path fill="#39434e" class="n" d="M2 6h12v9H2z"/><path stroke="#aab4be" d="M2 8.500h12M2 11.500h12"/></svg></button>
    <button class="more" aria-label="Меню строки"><i class="tri"></i></button>
    <button aria-label="Очистить экран"><svg class="i" viewBox="0 0 16 16"><path fill="#dbe9f6" stroke="#3b6ea5" stroke-width="2" d="M1 1h14v14H1z"/><path fill="#a9cbe8" class="n" d="M3 3h10v10H3z"/></svg></button>
  </div>
</footer>
</body>
</html>
```
FILE: styles.css
```css
* { box-sizing: border-box; }
body {
  margin: 0;
  height: 100vh;
  min-height: 700px;
  display: flex;
  flex-direction: column;
  overflow: hidden;
  background: #f0f0f0;
  color: #000;
  font: 11px "Liberation Sans", Arial, sans-serif;
}
button, input, select { font: inherit; color: inherit; margin: 0; padding: 0; border-radius: 0; }
button { background: none; border: 0; display: flex; align-items: center; justify-content: center; white-space: nowrap; }
a { color: inherit; text-decoration: none; }
h1, h2 { margin: 0; font-weight: 400; }
.defs { position: absolute; width: 0; height: 0; }

svg { fill: none; stroke-width: 1; }
.i { width: 16px; height: 16px; flex: none; overflow: visible; display: block; }
.g20 { width: 20px; height: 20px; flex: none; display: block; }
.x8 { width: 8px; height: 8px; flex: none; }
.k { stroke: #111; }
.b { stroke: #2b5f92; }
.r { stroke: #d02020; }
.g { stroke: #888; }
.w { stroke: #fff; }
.st { stroke: #40709f; }
.n { stroke: none; }
.w2 { stroke-width: 2; }
.fk { fill: #111; }
.fb { fill: #1c5c94; }
.fl { fill: #cfe2f3; }
.fr { fill: #e01818; }
.fw { fill: #fff; }
.fst { fill: #5c87b2; }
svg text { stroke: none; font-weight: 700; }
svg text:not([fill]) { fill: #111; }
.t6 { font-size: 6px; }
.t7 { font-size: 7px; }
.t8 { font-size: 8px; }
.t9 { font-size: 10px; }
.serif { font: 13px "Liberation Serif", serif; }
svg text.thin, svg text.serif { font-weight: 400; }
svg text.cr:not([fill]) { fill: #d02020; }
svg text.cb:not([fill]) { fill: #1b1bbb; }
svg text.cg:not([fill]) { fill: #1c8a2c; }

.titlebar { display: grid; grid-template-columns: 1fr auto 1fr; height: 23px; flex: none; background: #ebebeb; padding-left: 3px; align-items: center; }
.titlebar h1 { font: 15px "Open Sans", sans-serif; color: #333; }
.wbtns { display: flex; justify-self: end; height: 100%; align-items: flex-start; }
.wbtns button { width: 26px; height: 18px; }
.wbtns .wclose { width: 45px; background: #bcbcbc; margin: 0 3px 0 1px; }

.menubar { display: flex; flex: none; height: 20px; align-items: center; background: #f5f6f7; padding-left: 7px; color: #6d6d6d; font: 11px "Open Sans", sans-serif; gap: 15px; }
.menubar > .i { margin-right: -8px; }
.mdi { margin-left: auto; display: flex; gap: 1px; padding-right: 1px; }
.mdi button { width: 18px; height: 18px; border: 1px solid #8fadc9; background: #d7e5f3; }

.bar { display: flex; flex: none; height: 28px; background: #f0f0f0; overflow: hidden; }
.short { height: 27px; }
.grp { display: flex; align-items: center; flex: none; border-right: 1px solid #8f8f8f; border-bottom: 1px solid #8f8f8f; border-top: 1px solid #fff; border-left: 1px solid #fff; padding-right: 2px; margin-right: 1px; }
.grp.lead { padding-left: 12px; }
.grp.styles { padding-left: 12px; }
.grp.props { padding-left: 13px; }
.grp.open { border-right: 0; flex: 1 0 auto; }
.grp > button { width: 23px; height: 22px; flex: none; }
.grp > .dd { width: 13px; }
.dd::after { content: ""; border: 3px solid transparent; border-top-color: #aaa; border-bottom: 0; }
.sep { width: 1px; height: 18px; margin: 0 3px 0 2px; background: #9a9a9a; }
.vsep { width: 1px; height: 18px; margin: 0 2px; background: #333; }

.combo { display: grid; align-items: center; position: relative; color: #6d6d6d; font-size: 11px; }
.combo > * { grid-area: 1 / 1; }
.combo::after { content: ""; grid-area: 1 / 1; justify-self: end; width: 6px; height: 6px; margin: 0 7px 4px 0; border: solid #b4b4b4; border-width: 0 2px 2px 0; transform: rotate(45deg); pointer-events: none; }
.combo select { appearance: none; width: 100%; height: 22px; border: 1px solid #d6d6d6; background: linear-gradient(#efefef, #efefef) 2px 2px / calc(100% - 20px) calc(100% - 4px) no-repeat #fff; padding-left: 4px; opacity: 1; }
.combo select.in6 { padding-left: 8px; }
.combo select.in16 { padding-left: 18px; }
.combo select.in40 { padding-left: 44px; }
.combo select.in50 { padding-left: 53px; }
.combo select.in66 { padding-left: 69px; }
.combo select.in80 { padding-left: 87px; }
.pre { z-index: 1; pointer-events: none; justify-self: start; }
.layer { display: flex; padding-left: 3px; }
.ln { width: 66px; height: 4px; }
.c120 { width: 120px; }
.c125 { width: 125px; }
.c151 { width: 151px; }
.c159 { width: 159px; }
.c160 { width: 160px; }
.c166 { width: 166px; }
.c176 { width: 176px; }
.c300 { width: 300px; }

.work { display: flex; flex: 1; min-height: 0; }
.palette { width: 101px; flex: none; display: flex; flex-direction: column; padding-right: 3px; background: #f0f0f0; border-right: 1px solid #c8c8c8; }
.phead { display: flex; justify-content: flex-end; padding: 6px 7px 3px 0; }
.phead button { width: 10px; height: 9px; border: 1px solid #777; background: #fff; }
.pbtns { display: grid; grid-template-columns: 1fr 1fr; font: 10px Roboto, sans-serif; }
.pbtns button { height: 18px; border: 1px solid; border-color: #fff #8c8c8c #8c8c8c #fff; }
.ptabs { display: flex; align-items: flex-end; height: 24px; font: 700 11px "Liberation Sans", sans-serif; }
.ptabs button { width: 46px; height: 18px; text-decoration: underline; border: 1px solid #b4b4b4; border-bottom: 0; }
.ptabs .on { width: 48px; height: 22px; background: #fff; border-left: 0; font-size: 12px; }
.plist { background: #fff; flex: 1; min-height: 0; border-right: 1px solid #bbb; border-bottom: 1px solid #bbb; margin-right: 2px; padding-top: 1px; }
.plist > button { width: 95px; height: 16px; }
.row { width: 96px; height: 16px; flex: none; }
.row text { font: italic 700 12px "Liberation Sans", sans-serif; }
.pgap { display: block; height: 8px; }
.ptools { display: grid; grid-template-columns: repeat(4, 24px); }
.ptools button { height: 24px; }
.ptools .tx { font: 700 10px "DejaVu Sans", sans-serif; }
.esc { height: 22px; margin: 2px 1px 27px 0; border: 1px solid #adadad; border-left: 0; background: #e8e8e8; font-size: 12px; }

.right { flex: 1; min-width: 0; display: flex; flex-direction: column; }
.area { flex: 1; min-height: 0; display: flex; padding-left: 2px; border-bottom: 1px solid #fff; }
.col { width: 26px; flex: none; display: flex; flex-direction: column; }
.vgrp { flex: none; display: flex; flex-direction: column; align-items: center; padding: 11px 0 5px; border: 1px solid; border-color: #fff #9a9a9a #9a9a9a #fff; margin-right: 1px; }
.vgrp.fill { flex: 1; border-bottom: 0; min-height: 0; overflow: hidden; }
.vgrp button { width: 22px; height: 22px; flex: none; }
.hsep { width: 18px; height: 1px; margin: 3px 0 2px; background: #9a9a9a; flex: none; }

.doc { flex: 1; min-width: 0; display: flex; flex-direction: column; border-left: 1px solid #888; padding-right: 2px; margin-left: 1px; }
.dtabs { display: flex; height: 25px; padding-top: 3px; flex: none; border-bottom: 1px solid #a0a0a0; }
.dtabs button { padding: 0 5px; height: 20px; border-right: 1px solid #999; background: #e8e8e8; margin-top: 1px; border-top: 1px solid #bbb; }
.dtabs .on { background: #fff; margin-top: 0; border-top: 0; padding: 0 7px; }
.view { flex: 1; min-height: 0; display: flex; }
.canvas { flex: 1; position: relative; background: #000; }
.ucs { position: absolute; left: 5px; bottom: 7px; width: 90px; height: 90px; }
.vscroll { width: 17px; display: flex; flex-direction: column; align-items: center; background: #f0f0f0; }
.thumb { width: 15px; height: 17px; background: #cdcdcd; }
.vscroll button { width: 17px; height: 17px; }
.vscroll .down { margin-top: auto; }
.vscroll button::after, .hscroll button::after { content: ""; width: 6px; height: 6px; border: solid #555; border-width: 2px 0 0 2px; }
.up::after { transform: rotate(45deg); }
.vscroll .down::after { transform: rotate(225deg); }
.left::after { transform: rotate(-45deg); }
.rt::after { transform: rotate(135deg); }
.sheets { display: flex; height: 17px; flex: none; align-items: flex-start; }
.nav { display: flex; padding-left: 1px; }
.nav button { width: 15px; height: 16px; border: 1px solid #b4b4b4; border-left-color: #fff; }
.nav svg { width: 14px; height: 14px; flex: none; }
.nav path { stroke: #666; fill: #666; }
.stabs { display: flex; }
.stabs button { position: relative; height: 16px; padding: 0 10px; margin-right: -3px; }
.stabs button::after { content: ""; position: absolute; right: 3px; top: 0; width: 1px; height: 16px; background: #555; transform: skewX(-24deg); }
.stabs .on { background: #000; color: #fff; padding: 0 12px; margin-right: -6px; clip-path: polygon(0 0, 100% 0, calc(100% - 7px) 100%, 6px 100%); }
.hscroll { margin-left: auto; display: flex; width: 402px; border-left: 1px solid #999; }
.hscroll button { width: 18px; height: 16px; }
.hthumb { width: 16px; height: 14px; background: #cdcdcd; margin-left: auto; }
.hscroll .left { margin-left: 4px; }
.hscroll .rt { margin-right: 16px; }

.cmd { height: 35px; flex: none; border-left: 1px solid #777; border-top: 2px solid #777; margin: 4px 0 0 2px; padding: 10px 26px 0 16px; }
.cmd input { width: 100%; height: 22px; border: 1px solid #ddd; border-top: 2px solid #777; border-left: 2px solid #777; background: #fff; display: block; }

.status { display: flex; flex: none; height: 20px; padding-top: 2px; gap: 4px; border-top: 1px solid #a0a0a0; overflow: hidden; align-items: flex-start; }
.coords { width: 170px; height: 20px; line-height: 20px; padding-left: 5px; border: 1px solid #999; border-left: 0; }
.status > button { height: 20px; padding: 0 1px; border: 1px solid; border-color: #fff #aaa #aaa #fff; }
.status > .down { border-color: #000 #fff #fff #000; }
.tray { margin-left: auto; display: flex; align-items: center; gap: 1px; padding-right: 1px; height: 19px; }
.tray button { width: 24px; height: 20px; }
.tray .scale { width: 44px; gap: 6px; }
.tray .boxed { border: 1px solid #999; }
.tray .more { width: 17px; }
.tri { border: 4px solid transparent; border-top-color: #000; border-bottom: 0; }

.dialog { position: absolute; left: 313px; top: 34px; width: 499px; background: #fcfcfc; border: 1px solid #c4c4c4; padding: 0 6px 6px; }
.dhead { display: grid; grid-template-columns: 31px 1fr 31px; align-items: center; height: 30px; }
.dhead h2 { grid-column: 2; text-align: center; font: 15px "Open Sans", sans-serif; color: #333; }
.dhead button { width: 31px; height: 20px; background: #c75050; align-self: start; }
.dbody { display: flex; gap: 13px; background: #f0f0f0; border: 1px solid #d9d9d9; padding: 11px 11px 13px; }
.dleft { width: 324px; flex: none; }
.tabs { display: flex; align-items: flex-end; height: 20px; }
.tabs button { height: 18px; padding: 0 10px 0 11px; border: 1px solid #fff; border-right: 2px solid #777; border-bottom: 0; }
.tabs .on { height: 20px; padding: 0 12px; }
.panel { border: 1px solid #fff; border-right: 2px solid #777; border-bottom: 2px solid #777; padding: 9px 0 4px 12px; }
.dialog label { display: flex; align-items: center; gap: 3px; }
.prow { display: flex; align-items: flex-start; }
.prow > label { height: 20px; }
.prow select { height: 20px; }
.p1 { height: 18px; }
.p2 { height: 24px; }
.p2 label { width: 102px; padding-top: 3px; }
.p3 { height: 25px; }
.p3 label { width: 109px; }
.p4 { height: 20px; }
.p4 label { width: 109px; padding-left: 25px; }
.dis { color: #6d6d6d; }
.off select { background: #eee; }
.dots { width: 24px; height: 24px; margin-left: 9px; border: 1px solid #d0d0d0; color: #999; }
.dialog input[type=radio], .dialog input[type=checkbox] { appearance: none; width: 13px; height: 13px; border: 1px solid #707070; background: #fff; flex: none; }
.dialog input[type=radio] { border-radius: 50%; }
.dialog input[type=radio]:checked { background: radial-gradient(#222 0 3px, #fff 4px); }
.dialog input[type=checkbox]:disabled { background: #e6e6e6; border-color: #bcbcbc; }
fieldset { margin: 8px 0 0; border: 1px solid #dcdcdc; padding: 0 0 2px 6px; min-width: 0; }
legend { padding: 0 2px; line-height: 14px; margin-bottom: -3px; }
.frow { display: flex; align-items: center; height: 26px; }
.frow > label { width: 80px; }
.frow .combo { width: 146px; }
.btn { height: 21px; border: 1px solid #adadad; background: linear-gradient(#f0f0f0, #e4e4e4); }
.btn.small { width: 70px; margin-left: 9px; }
.btn.def { border-color: #4a8ac8; }
.dialog .lock { margin: 5px 0 0 24px; white-space: nowrap; }
.dright { flex: 1; display: flex; flex-direction: column; gap: 18px; padding-top: 20px; }
.dialog .num { justify-content: flex-end; gap: 14px; white-space: nowrap; margin-top: 4px; }
.dialog .num + .num { margin-top: -12px; }
.num input { width: 36px; height: 23px; border: 1px solid #a8a8a8; padding: 0 3px 4px; background: #fff; font-size: 12px; }
```
